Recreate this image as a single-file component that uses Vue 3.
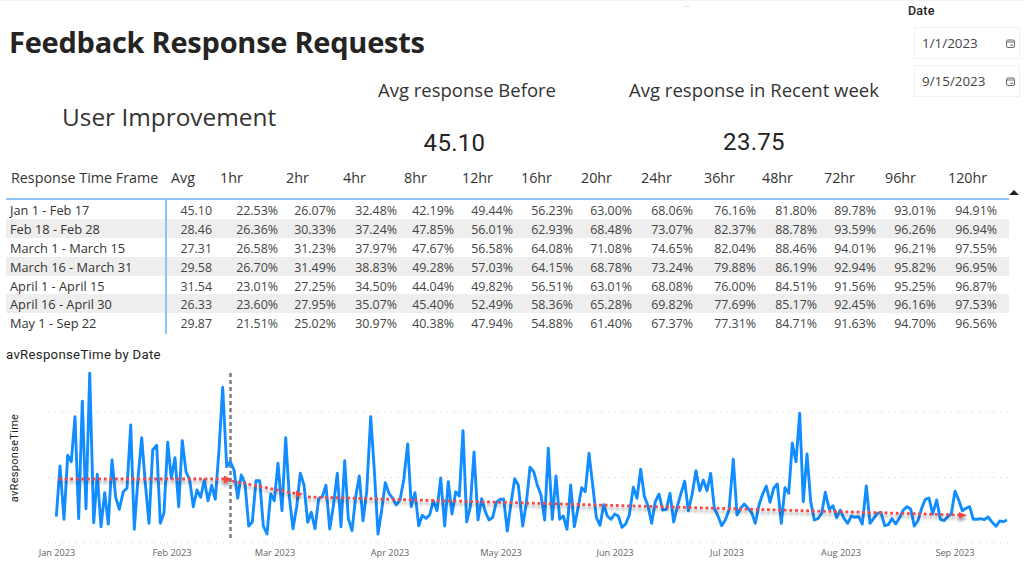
<script setup>
const headers = [
  ['Response Time Frame', 160], ['Avg', 49], ['1hr', 66], ['2hr', 57], ['4hr', 61], ['8hr', 58], ['12hr', 59],
  ['16hr', 60], ['20hr', 60], ['24hr', 63], ['36hr', 58], ['48hr', 62], ['72hr', 61], ['96hr', 63], ['120hr', 62]
]
const rows = [
  ['Jan 1 - Feb 17', '45.10', '22.53%', '26.07%', '32.48%', '42.19%', '49.44%', '56.23%', '63.00%', '68.06%', '76.16%', '81.80%', '89.78%', '93.01%', '94.91%'],
  ['Feb 18 - Feb 28', '28.46', '26.36%', '30.33%', '37.24%', '47.85%', '56.01%', '62.93%', '68.48%', '73.07%', '82.37%', '88.78%', '93.59%', '96.26%', '96.94%'],
  ['March 1 - March 15', '27.31', '26.58%', '31.23%', '37.97%', '47.67%', '56.58%', '64.08%', '71.08%', '74.65%', '82.04%', '88.46%', '94.01%', '96.21%', '97.55%'],
  ['March 16 - March 31', '29.58', '26.70%', '31.49%', '38.83%', '49.28%', '57.03%', '64.15%', '68.78%', '73.24%', '79.88%', '86.19%', '92.94%', '95.82%', '96.95%'],
  ['April 1 - April 15', '31.54', '23.01%', '27.25%', '34.50%', '44.04%', '49.82%', '56.51%', '63.01%', '68.08%', '76.00%', '84.51%', '91.56%', '95.25%', '96.87%'],
  ['April 16 - April 30', '26.33', '23.60%', '27.95%', '35.07%', '45.40%', '52.49%', '58.36%', '65.28%', '69.82%', '77.69%', '85.17%', '92.45%', '96.16%', '97.53%'],
  ['May 1 - Sep 22', '29.87', '21.51%', '25.02%', '30.97%', '40.38%', '47.94%', '54.88%', '61.40%', '67.37%', '77.31%', '84.71%', '91.63%', '94.70%', '96.56%']
]
const months = [['Jan 2023', 57], ['Feb 2023', 172], ['Mar 2023', 275], ['Apr 2023', 390], ['May 2023', 501], ['Jun 2023', 615], ['Jul 2023', 727], ['Aug 2023', 841], ['Sep 2023', 955]]

const segments = [
  [0, [169,470,180,318,192,478,203,286,214,305,225,170,236,476,247,124,258,446,269,40,281,488,292,343,303,500,314,398,325,492,336,300,347,412,358,448,370,395,381,385,392,195,403,508,414,355,425,233,436,370,447,490,458,270,470,256,481,490,492,458,503,247,514,355,525,293,536,440,547,242,558,335,569,360,580,440,591,390,602,412,613,360,624,422,635,376,646,418,657,270,668,82,680,320,691,305,702,330,713,415,724,345,735,370,746,498,757,486,768,362,779,362]],
  [260, [10,498,21,522,32,402,43,422,54,310,66,452,77,233,88,410,99,506,110,440,121,340,132,375,143,487,154,457,165,506,176,415,187,410,198,376,209,507,220,440,232,340,243,500,254,302,265,475,276,512,287,410,298,348,309,482,320,395,332,170,343,330,354,522,365,450,376,368,387,400,398,415,409,435,420,420,431,360,443,252,454,440,465,398,476,497,487,466,498,475,509,465,520,422,531,452,542,354,554,498,565,365,576,462,587,395,598,408,609,212,620,486,631,440,642,276,654,480,665,416,676,455,687,480,698,472,709,427,720,418,731,418,742,513,753,430,764,356,775,375]],
  [520, [8,498,19,430,30,322,41,335,52,375,63,405,74,480,85,265,97,478,108,348,119,478,130,468,141,508,152,375,163,500,174,445,185,383,196,395,207,280,218,375,229,472,240,496,251,434,262,468,273,478,284,462,295,468,306,502,317,492,328,465,340,382,351,415,362,328,373,408,384,438,395,490,406,425,417,402,428,450,439,448,450,400,461,486,472,440,483,400,494,364,505,452,516,405,528,332,539,392,550,360,561,392,572,340,583,445,594,468,605,497,616,480,627,450,640,298,651,465,662,445,673,432,684,445,695,458,706,490,717,435,728,402,739,378,750,427,761,385,772,372]],
  [780, [4,490,15,383,26,400,37,250,48,305,59,160,70,425,81,282,92,425,103,480,114,476,125,460,136,397,148,448,159,437,170,473,181,450,192,475,203,490,214,468,225,472,236,470,247,492,259,378,270,490,281,475,292,460,303,457,314,497,325,494,336,476,347,492,358,475,370,450,381,440,392,447,403,498,414,482,425,445,436,418,447,414,458,462,470,420,481,478,492,482,503,470,514,462,525,394,536,420,547,452,558,445,569,440,580,478,591,478,602,476,613,479,624,471,635,485,648,499,659,483,670,485,681,480]]
]
const points = []
for (const [offset, values] of segments) {
  for (let i = 0; i < values.length; i += 2) {
    points.push(`${(offset + values[i] / 3).toFixed(1)},${(values[i + 1] / 3).toFixed(1)}`)
  }
}
const linePoints = points.join(' ')
</script>

<template>
  <div class="page">
    <div class="top-edge"></div>
    <span class="more">···</span>
    <header class="top">
      <div class="headline">
        <h1>Feedback Response Requests</h1>
        <p class="improve">User Improvement</p>
      </div>
      <div class="kpi kpi-before">
        <p class="kpi-label">Avg response Before</p>
        <p class="kpi-value">45.10</p>
      </div>
      <div class="kpi kpi-recent">
        <p class="kpi-label">Avg response in Recent week</p>
        <p class="kpi-value">23.75</p>
      </div>
      <div class="slicer">
        <p class="slicer-title">Date</p>
        <div class="date-box" v-for="d in ['1/1/2023', '9/15/2023']" :key="d">
          <span>{{ d }}</span>
          <svg width="9" height="9" viewBox="0 0 9 9" class="cal">
            <rect x="0.5" y="1" width="8" height="7.5" rx="1.5" fill="none" stroke="#666" />
            <path d="M1 3h7" stroke="#666" />
            <path d="M4.5 5.5h2.5v1.3H4.5z" fill="#777" />
          </svg>
        </div>
      </div>
    </header>

    <section class="matrix">
      <div class="head-row">
        <span v-for="h in headers" :key="h[0]" class="head-cell" :style="{ width: h[1] + 'px' }">{{ h[0] }}</span>
      </div>
      <div class="sort"></div>
      <div class="body">
        <div v-for="r in rows" :key="r[0]" class="row">
          <span v-for="(c, i) in r" :key="i" class="cell" :class="'c' + i">{{ c }}</span>
        </div>
      </div>
    </section>

    <section class="chart">
      <h2>avResponseTime by Date</h2>
      <svg class="plot" width="1024" height="561" viewBox="0 0 1024 561">
        <defs>
          <filter id="sh" x="-5%" y="-200%" width="110%" height="500%">
            <feDropShadow dx="0" dy="3" stdDeviation="1.6" flood-color="#000" flood-opacity="0.4" />
          </filter>
        </defs>
        <g transform="translate(0,360)">
          <g stroke="#cfcfcf" stroke-width="1" stroke-dasharray="1 6">
            <line x1="48" x2="1014" y1="52" y2="52" />
            <line x1="48" x2="1014" y1="117.5" y2="117.5" />
            <line x1="48" x2="1014" y1="183" y2="183" />
          </g>
          <line x1="230.5" x2="230.5" y1="13" y2="181" stroke="#808080" stroke-width="2.6" stroke-dasharray="4 3" />
          <polyline :points="linePoints" fill="none" stroke="#118dff" stroke-width="2.9" stroke-linejoin="round" />
          <g filter="url(#sh)">
            <g fill="none" stroke="#f44848" stroke-width="2.8" stroke-dasharray="2.8 2.8">
              <line x1="59" y1="119" x2="226" y2="119" />
              <line x1="232" y1="121" x2="298" y2="134" />
              <line x1="308" y1="137" x2="960" y2="155" />
            </g>
            <path d="M224 115.5l8 4-8 4z" fill="#f44848" />
            <path d="M296 130.5l7 3.5-7 3.5z" fill="#f44848" />
            <path d="M959 152l8 3.2-8 3.2z" fill="#f44848" />
          </g>
          <text
            v-for="m in months"
            :key="m[0]"
            class="month"
            :x="m[1]"
            y="196"
            text-anchor="middle"
          >{{ m[0] }}</text>
          <text class="axis-title" transform="translate(18,98) rotate(-90)" text-anchor="middle">avResponseTime</text>
        </g>
      </svg>
    </section>
  </div>
</template>

<style>
body { margin: 0; background: #fff; }
</style>

<style scoped>
.page {
  position: relative;
  width: 1024px;
  height: 561px;
  overflow: hidden;
  background: #fff;
  color: #252423;
  font-family: "Open Sans", "Noto Sans", sans-serif;
}
p, h1, h2 { margin: 0; font-weight: 400; }
.top-edge { height: 1px; background: #f1f1f1; }
.more { position: absolute; left: 684px; top: 1px; font-size: 7px; color: #999; line-height: 12px; }
.top {
  display: grid;
  grid-template-columns: 352px 287px 269px 116px;
  height: 167px;
}
.headline { padding: 22px 0 0 9px; }
h1 {
  font-size: 29px;
  line-height: 38px;
  font-weight: 700;
  white-space: nowrap;
  letter-spacing: -0.25px;
}
.improve {
  margin: 38px 0 0 53px;
  font-size: 24.4px;
  line-height: 36px;
  color: #333;
  white-space: nowrap;
}
.kpi { display: flex; flex-direction: column; align-items: center; padding-top: 77px; }
.kpi-before { width: 230px; }
.kpi-recent { width: 290px; margin-left: -30px; }
.kpi-label { font-size: 18.5px; line-height: 24px; color: #333; white-space: nowrap; }
.kpi-value { font-family: Roboto, sans-serif; font-size: 24px; line-height: 30px; letter-spacing: 0.3px; color: #252423; }
.kpi-before .kpi-value { margin: 26px 25px 0 0; }
.kpi-recent .kpi-value { margin-top: 25px; }
.slicer { padding-top: 2px; }
.slicer-title { font-family: Roboto, sans-serif; font-size: 12.5px; font-weight: 500; line-height: 15px; margin-bottom: 9px; letter-spacing: .2px; }
.date-box {
  box-sizing: border-box;
  width: 106px;
  height: 32px;
  margin: 0 0 6px 6px;
  border: 1px solid #f1f1f1;
  display: flex;
  align-items: center;
  justify-content: space-between;
  padding: 0 4px 0 7px;
  font-size: 13.4px;
  color: #444;
}
.cal { display: block; }
.head-row {
  display: flex;
  height: 30px;
  box-sizing: border-box;
  padding: 0 0 11px 11px;
  align-items: center;
  font-size: 14.3px;
  color: #333;
}
.matrix { position: relative; }
.head-cell { flex: none; white-space: nowrap; }
.sort {
  position: absolute;
  left: 1009px;
  top: 22px;
  width: 0;
  height: 0;
  border-left: 5px solid transparent;
  border-right: 5px solid transparent;
  border-bottom: 5px solid #252423;
}
.body { margin-left: 6px; width: 1003px; border-top: 2px solid #8cc4f5; }
.row {
  display: grid;
  grid-template-columns: 161px 45px 66px 58px 61px 57px 59px 60px 59px 61px 63px 61px 59px 60px 61px;
  height: 18.9px;
  line-height: 21px;
  font-size: 12.4px;
  color: #444;
  white-space: nowrap;
}
.row:nth-child(even) { background: #eee; }
.cell { text-align: right; }
.c0 { text-align: left; padding-left: 4px; border-right: 2px solid #8cc4f5; box-sizing: border-box; color: #333; font-size: 12.8px; }
.chart { position: relative; }
h2 {
  position: absolute;
  left: 6px;
  top: 15px;
  font-family: Roboto, sans-serif;
  font-size: 13.2px;
  font-weight: 400;
  letter-spacing: .3px;
  line-height: 16px;
  color: #252423;
}
.plot { position: absolute; left: 0; top: -332px; }
.month { font-family: "Open Sans", sans-serif; font-size: 9.2px; fill: #666; }
.axis-title { font-family: Roboto, sans-serif; font-size: 11px; letter-spacing: .3px; fill: #252423; }
</style>
